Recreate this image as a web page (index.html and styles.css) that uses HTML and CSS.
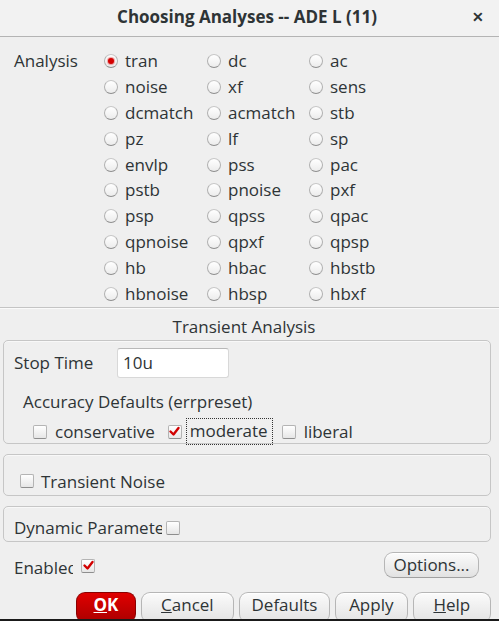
FILE: index.html
```html
<!DOCTYPE html>
<html>
<head>
<meta charset="utf-8">
<link rel="stylesheet" href="styles.css">
</head>
<body>
<div class="window">
  <div class="titlebar">
    <span class="title">Choosing Analyses -- ADE L (11)</span>
    <span class="close">✕</span>
  </div>
  <div class="content">
    <div class="analysis">
      <div class="alabel">Analysis</div>
      <div class="grid">
        <label class="opt"><span class="radio on"></span>tran</label>
        <label class="opt"><span class="radio"></span>dc</label>
        <label class="opt"><span class="radio"></span>ac</label>
        <label class="opt"><span class="radio"></span>noise</label>
        <label class="opt"><span class="radio"></span>xf</label>
        <label class="opt"><span class="radio"></span>sens</label>
        <label class="opt"><span class="radio"></span>dcmatch</label>
        <label class="opt"><span class="radio"></span>acmatch</label>
        <label class="opt"><span class="radio"></span>stb</label>
        <label class="opt"><span class="radio"></span>pz</label>
        <label class="opt"><span class="radio"></span>lf</label>
        <label class="opt"><span class="radio"></span>sp</label>
        <label class="opt"><span class="radio"></span>envlp</label>
        <label class="opt"><span class="radio"></span>pss</label>
        <label class="opt"><span class="radio"></span>pac</label>
        <label class="opt"><span class="radio"></span>pstb</label>
        <label class="opt"><span class="radio"></span>pnoise</label>
        <label class="opt"><span class="radio"></span>pxf</label>
        <label class="opt"><span class="radio"></span>psp</label>
        <label class="opt"><span class="radio"></span>qpss</label>
        <label class="opt"><span class="radio"></span>qpac</label>
        <label class="opt"><span class="radio"></span>qpnoise</label>
        <label class="opt"><span class="radio"></span>qpxf</label>
        <label class="opt"><span class="radio"></span>qpsp</label>
        <label class="opt"><span class="radio"></span>hb</label>
        <label class="opt"><span class="radio"></span>hbac</label>
        <label class="opt"><span class="radio"></span>hbstb</label>
        <label class="opt"><span class="radio"></span>hbnoise</label>
        <label class="opt"><span class="radio"></span>hbsp</label>
        <label class="opt"><span class="radio"></span>hbxf</label>
      </div>
    </div>
    <div class="sep"></div>
    <div class="section-title">Transient Analysis</div>
    <div class="group g1">
      <div class="stoprow">
        <span class="stoplabel">Stop Time</span>
        <span class="input">10u</span>
      </div>
      <div class="acc">Accuracy Defaults (errpreset)</div>
      <div class="checks">
        <span class="cb"></span><span class="cbtext">conservative</span>
        <span class="cb on"><svg viewBox="0 0 13 13" width="13" height="13"><path d="M2.5 6.5 L5.5 9.5 L10.5 3" fill="none" stroke="#d10000" stroke-width="2.4" stroke-linecap="round" stroke-linejoin="round"/></svg></span><span class="cbtext focus">moderate</span>
        <span class="cb"></span><span class="cbtext">liberal</span>
      </div>
    </div>
    <div class="group g2">
      <span class="cb"></span><span class="cbtext">Transient Noise</span>
    </div>
    <div class="group g3">
      <span class="dynlabel">Dynamic Parameter</span><span class="cb"></span>
    </div>
    <div class="enablerow">
      <span class="enlabel">Enabled</span>
      <span class="cb on"><svg viewBox="0 0 13 13" width="13" height="13"><path d="M2.5 6.5 L5.5 9.5 L10.5 3" fill="none" stroke="#d10000" stroke-width="2.4" stroke-linecap="round" stroke-linejoin="round"/></svg></span>
      <span class="spacer"></span>
      <span class="btn options">Options...</span>
    </div>
    <div class="buttons">
      <span class="btn ok"><u>O</u>K</span>
      <span class="btn cancel"><u>C</u>ancel</span>
      <span class="btn defaults">Defaults</span>
      <span class="btn apply">Apply</span>
      <span class="btn help"><u>H</u>elp</span>
    </div>
  </div>
  <div class="bottomline"></div>
</div>
</body>
</html>
```

FILE: styles.css
```css
* { box-sizing: border-box; }
html, body { margin: 0; padding: 0; }
body {
  width: 499px;
  height: 621px;
  overflow: hidden;
  background: #efefef;
  font-family: "Open Sans", "Noto Sans", sans-serif;
  font-size: 17px;
  color: #2e3436;
}
.window {
  width: 499px;
  height: 621px;
  display: flex;
  flex-direction: column;
}
.titlebar {
  height: 37px;
  flex: none;
  background: #f2f2f2;
  border-bottom: 1px solid #b4b4b4;
  display: flex;
  align-items: center;
  justify-content: center;
  position: relative;
}
.title {
  font-weight: bold;
  font-size: 17px;
  color: #2e3436;
  margin-left: -5px;
  margin-top: -4px;
}
.close {
  position: absolute;
  right: 15px;
  top: 7px;
  font-size: 14px;
  font-weight: bold;
  color: #2e3436;
}
.content {
  flex: 1;
  display: flex;
  flex-direction: column;
  padding: 0 8px 0 3px;
}
.analysis {
  display: flex;
  padding-top: 11px;
  height: 270px;
}
.alabel {
  width: 101px;
  padding-left: 11px;
  line-height: 25.8px;
}
.grid {
  display: grid;
  grid-template-columns: 103px 102px 100px;
  grid-auto-rows: 25.8px;
}
.opt {
  display: flex;
  align-items: center;
  gap: 7px;
  white-space: nowrap;
}
.radio {
  width: 14px;
  height: 14px;
  border-radius: 50%;
  border: 1px solid #b0b0b0;
  border-top-color: #c8c8c8;
  border-bottom-color: #8e8e8e;
  background: linear-gradient(#ffffff, #ececec);
  flex: none;
  position: relative;
  margin-top: 1px;
}
.radio.on::after {
  content: "";
  position: absolute;
  left: 3px;
  top: 3px;
  width: 6px;
  height: 6px;
  border-radius: 50%;
  background: #d40000;
  box-shadow: 0 0 1px 1px rgba(210,0,0,0.35);
}
.sep {
  height: 2px;
  margin: 0 -8px 0 -3px;
  border-top: 1px solid #c4c4c4;
  border-bottom: 1px solid #fafafa;
}
.section-title {
  text-align: center;
  line-height: 20px;
  margin-top: 8px;
  margin-left: -6px;
}
.group {
  border: 1px solid #c6c6c6;
  border-radius: 5px;
  box-shadow: inset 0 1px 0 #f8f8f8;
}
.g1 {
  height: 104px;
  margin-top: 3px;
  padding: 7px 0 0 10px;
  display: flex;
  flex-direction: column;
}
.stoprow {
  display: flex;
  align-items: center;
  height: 30px;
}
.stoplabel {
  width: 103px;
  margin-top: -2px;
}
.input {
  width: 112px;
  height: 30px;
  background: #ffffff;
  border: 1px solid #d8d8d8;
  border-top-color: #b8b8b8;
  border-radius: 3px;
  padding-left: 5px;
  line-height: 27px;
}
.acc {
  margin-top: 14px;
  padding-left: 9px;
  line-height: 20px;
}
.checks {
  display: flex;
  align-items: center;
  height: 27px;
  margin-top: 6px;
  padding-left: 19px;
}
.cb {
  width: 14px;
  height: 14px;
  border: 1px solid #b4b4b4;
  border-bottom-color: #8e8e8e;
  border-radius: 2px;
  background: linear-gradient(#ffffff, #e6e6e6);
  flex: none;
  display: inline-flex;
  align-items: center;
  justify-content: center;
}
.cb svg { display: block; margin: -1px; }
.cbtext {
  margin-left: 8px;
  margin-right: 13px;
  white-space: nowrap;
}
.cbtext.focus {
  margin-left: 4px;
  margin-right: 9px;
  padding: 2px 4px 3px 3px;
  border: 1px dotted #333;
  line-height: 20px;
}
.g2 {
  height: 42px;
  margin-top: 10px;
  display: flex;
  align-items: center;
  padding: 12px 0 0 16px;
}
.g2 .cbtext { margin-left: 7px; }
.g3 {
  height: 36px;
  margin-top: 10px;
  display: flex;
  align-items: center;
  padding: 6px 0 0 10px;
}
.dynlabel {
  width: 148px;
  margin-right: 4px;
  overflow: hidden;
  white-space: nowrap;
}
.g3 .cb { margin-top: 2px; }
.enablerow {
  display: flex;
  align-items: center;
  margin-top: 11px;
  height: 26px;
  padding-left: 11px;
}
.enlabel {
  width: 59px;
  margin-right: 8px;
  overflow: hidden;
  white-space: nowrap;
  margin-top: 2px;
}
.enablerow .cb { margin-top: -1px; }
.spacer { flex: 1; }
.btn {
  display: inline-flex;
  align-items: center;
  justify-content: center;
  border: 1px solid #b6b6b6;
  border-bottom-color: #a0a0a0;
  border-radius: 9px;
  background: linear-gradient(#fbfbfb, #e2e2e2);
  box-shadow: inset 0 1px 0 #ffffff;
  color: #2e3436;
  white-space: nowrap;
}
.options {
  width: 95px;
  height: 26px;
  margin-right: 12px;
  margin-top: -2px;
  padding-bottom: 2px;
}
.buttons {
  display: flex;
  margin-top: 13px;
  padding-left: 73px;
  gap: 5px;
  height: 27px;
}
.buttons .btn {
  height: 31px;
  border-bottom: none;
  padding-bottom: 7px;
}
.ok {
  width: 61px;
  background: linear-gradient(#e00000, #a90000);
  border-color: #8a0000;
  color: #ffffff;
  font-weight: bold;
  box-shadow: none;
}
.cancel { width: 95px; }
.defaults { width: 93px; }
.apply { width: 74px; }
.help { width: 80px; }
.bottomline {
  height: 2px;
  flex: none;
  background: #1a1a1a;
  position: relative;
  z-index: 1;
}
```
